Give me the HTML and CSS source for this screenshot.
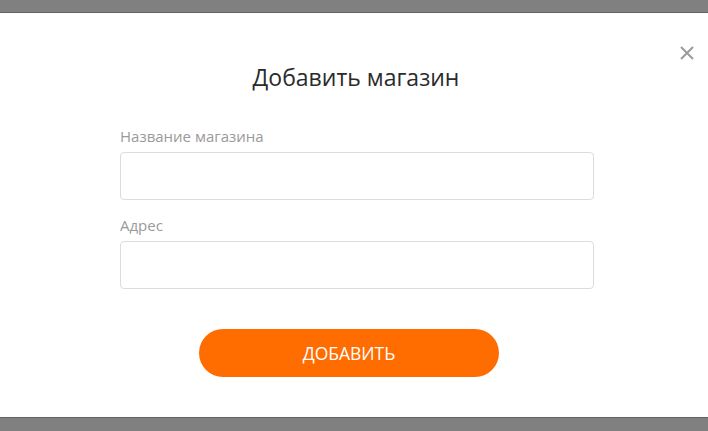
FILE: index.html
```html
<!DOCTYPE html>
<html lang="ru">
<head>
<meta charset="utf-8">
<title>Добавить магазин</title>
<link rel="stylesheet" href="styles.css">
</head>
<body>
<div class="overlay">
  <div class="modal">
    <button class="close" aria-label="Закрыть">
      <svg width="14" height="14" viewBox="0 0 14 14"><path d="M1 1 L13 13 M13 1 L1 13" stroke="#9b9b9b" stroke-width="2" fill="none"/></svg>
    </button>
    <h1 class="title">Добавить магазин</h1>
    <form class="form">
      <label class="field">
        <span class="label">Название магазина</span>
        <input class="input" type="text">
      </label>
      <label class="field">
        <span class="label">Адрес</span>
        <input class="input" type="text">
      </label>
    </form>
    <button class="submit">ДОБАВИТЬ</button>
  </div>
</div>
</body>
</html>
```

FILE: styles.css
```css
html, body {
  margin: 0;
  padding: 0;
}
body {
  background: #808080;
  font-family: "Open Sans", "Noto Sans", sans-serif;
}
.overlay {
  height: 431px;
  padding-top: 13px;
  box-sizing: border-box;
  overflow: hidden;
}
.modal {
  position: relative;
  height: 404px;
  background: #fff;
  box-shadow: 0 0 0 1px #626262;
  display: flex;
  flex-direction: column;
}
.close {
  position: absolute;
  top: 33px;
  right: 14px;
  width: 14px;
  height: 14px;
  padding: 0;
  border: 0;
  background: none;
  display: block;
}
.close svg {
  display: block;
}
.title {
  margin: 48px 0 0 0;
  font-size: 23px;
  line-height: 32px;
  font-weight: 500;
  color: #2b2b2b;
  text-align: center;
  padding-left: 4px;
}
.form {
  margin: 33px 0 0 120px;
  width: 474px;
  display: flex;
  flex-direction: column;
  gap: 15px;
}
.field {
  display: flex;
  flex-direction: column;
  gap: 6px;
}
.label {
  font-size: 15px;
  line-height: 20px;
  color: #9a9a9a;
}
.input {
  box-sizing: border-box;
  height: 48px;
  width: 100%;
  margin: 0;
  border: 1px solid #dcdcdc;
  border-radius: 4px;
  background: #fff;
  outline: none;
}
.submit {
  margin: 40px 0 0 199px;
  width: 300px;
  height: 48px;
  border: 0;
  border-radius: 24px;
  background: #ff6c00;
  color: #fff;
  font-family: "Open Sans", "Noto Sans", sans-serif;
  font-size: 17.5px;
  padding: 0;
}
```
